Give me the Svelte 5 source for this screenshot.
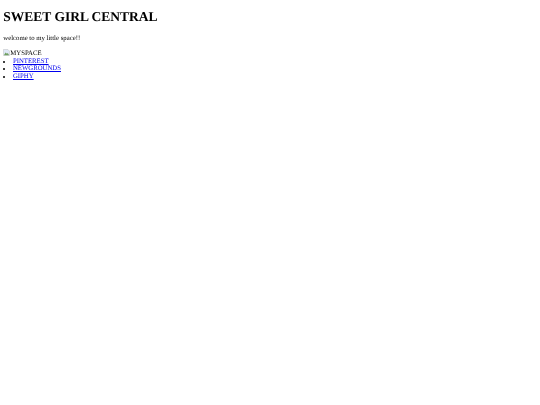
<script lang="ts">
  const links = ['PINTEREST', 'NEWGROUNDS', 'GIPHY'];
</script>

<main class="page">
  <h1>SWEET GIRL CENTRAL</h1>
  <p>welcome to my little space!!</p>
  <div class="broken">
    <svg class="broken__icon" viewBox="0 0 16 16" aria-hidden="true">
      <path d="M1 1h10l4 4v10H1z" fill="#dfe8f7" stroke="#b5b5b5" />
      <path d="M2 14l4-6 3 3 2-2 3 5z" fill="#6f9f5f" />
    </svg>MYSPACE
  </div>
  <ul>
    {#each links as link}
      <li><a href="#top">{link}</a></li>
    {/each}
  </ul>
</main>

<style>
  :global(body) {
    margin: 0;
    background: #fff;
  }

  .page {
    padding: 3.3px;
    font-family: "Liberation Serif", "Times New Roman", serif;
    font-size: 6.75px;
    line-height: 7.5px;
    color: #000;
    text-rendering: geometricPrecision;
    will-change: transform;
  }

  h1 {
    margin: 5.7px 0 10.7px;
    font-size: 13.5px;
    line-height: 15.3px;
  }

  p {
    margin: 0 0 6.9px;
  }

  .broken__icon {
    width: 7px;
    height: 7px;
    vertical-align: -1px;
  }

  ul {
    margin: 0;
    padding: 0 0 0 9.7px;
  }

  a {
    color: #00e;
  }
</style>
